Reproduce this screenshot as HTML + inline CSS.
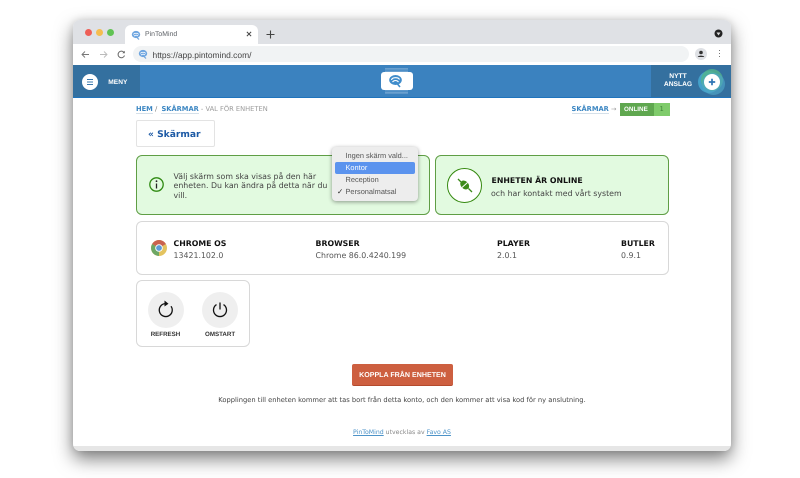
<!DOCTYPE html>
<html><head><meta charset="utf-8">
<style>
html,body{margin:0;padding:0;width:800px;height:478px;overflow:hidden;background:#fff}
*{box-sizing:border-box}
.a{position:absolute;white-space:nowrap}
body{font-family:"DejaVu Sans",sans-serif;color:#333;text-rendering:geometricPrecision}
.m{font-family:"Liberation Sans",sans-serif}
.card{position:absolute;border-radius:6px}
.gr{background:#e2fae0;border:1px solid #5f9e45}
.wh{background:#fff;border:1.500px solid #d8d8d8}
.h{font-weight:bold;font-size:7.800px;color:#111}
.v{font-size:7.850px;color:#555}
.lnk{color:#3b86c2;font-weight:bold;border-bottom:1px solid #d5e0e9}
</style></head><body>

<div class="a" style="left:73px;top:20px;width:658px;height:431px;border-radius:7px;background:#fff;overflow:hidden;box-shadow:0 8px 18px rgba(0,0,0,.5),0 0 8px rgba(0,0,0,.12)">
  <div class="a" style="left:0;top:0;width:658px;height:24px;background:#dfe1e5"></div>
  <div class="a" style="left:0;top:24px;width:658px;height:20px;background:#fff"></div>
  <div class="a" style="left:0;top:426px;width:658px;height:5px;background:#e6e6e6"></div>
  <div class="a" style="left:0;top:45px;width:658px;height:33px;background:#3b82bf;border-bottom:1px solid #1f74bd"></div>
  <div class="a" style="left:0;top:45px;width:67px;height:32px;background:#34709f"></div>
  <div class="a" style="left:578px;top:45px;width:80px;height:32px;background:#34709f"></div>
</div>

<!-- traffic lights -->
<div class="a" style="left:84.500px;top:28.500px;width:7px;height:7px;border-radius:50%;background:#ee5f57"></div>
<div class="a" style="left:95.500px;top:28.500px;width:7px;height:7px;border-radius:50%;background:#f5bd4f"></div>
<div class="a" style="left:107px;top:28.500px;width:7px;height:7px;border-radius:50%;background:#61c354"></div>

<!-- tab -->
<div class="a" style="left:125px;top:25px;width:133px;height:19px;background:#fff;border-radius:6px 6px 0 0"></div>
<svg class="a" style="left:131px;top:29.500px" width="10" height="10" viewBox="0 0 10 10"><ellipse cx="5" cy="4.500" rx="4.200" ry="3.600" fill="#6fa6e0"/><path d="M2.500 4.500C3 2.800 7 2.800 7.500 4.500M3 6c1.500-1 3-1 4 0" stroke="#fff" stroke-width=".8" fill="none"/><path d="M6 7.500L8 9.500" stroke="#6fa6e0" stroke-width="1.200"/></svg>
<div class="a m" style="left:145px;top:31px;font-size:6.900px;color:#5f6368">PinToMind</div>
<svg class="a" style="left:246px;top:31px" width="6" height="6" viewBox="0 0 7 7"><path d="M1 1L6 6M6 1L1 6" stroke="#444" stroke-width="1.100"/></svg>
<svg class="a" style="left:266px;top:30px" width="9" height="9" viewBox="0 0 9 9"><path d="M4.500 .5V8.500M.5 4.500H8.500" stroke="#444" stroke-width="1.100"/></svg>
<svg class="a" style="left:714px;top:29px" width="9" height="9" viewBox="0 0 9 9"><circle cx="4.500" cy="4.500" r="4" fill="#222"/><path d="M2.500 3.500H6.500L4.500 6.500Z" fill="#ddd"/></svg>

<!-- toolbar -->
<svg class="a" style="left:81px;top:49.500px" width="9" height="9" viewBox="0 0 9 9"><path d="M8 4.500H1M4 1.500L1 4.500L4 7.500" stroke="#777" stroke-width=".9" fill="none"/></svg>
<svg class="a" style="left:99px;top:49.500px" width="9" height="9" viewBox="0 0 9 9"><path d="M1 4.500H8M5 1.500L8 4.500L5 7.500" stroke="#bbb" stroke-width=".9" fill="none"/></svg>
<svg class="a" style="left:117px;top:49.500px" width="9" height="9" viewBox="0 0 9 9"><path d="M7.500 5.500A3.300 3.300 0 1 1 7 2.500" stroke="#666" stroke-width="1" fill="none"/><path d="M7.800 .8V3.300H5.300Z" fill="#666"/></svg>
<div class="a" style="left:133px;top:46px;width:556px;height:16px;border-radius:8px;background:#f1f3f4"></div>
<svg class="a" style="left:138px;top:49px" width="10" height="10" viewBox="0 0 10 10"><ellipse cx="5" cy="4.500" rx="4.200" ry="3.600" fill="#6fa6e0"/><path d="M2.500 4.500C3 2.800 7 2.800 7.500 4.500M3 6c1.500-1 3-1 4 0" stroke="#fff" stroke-width=".8" fill="none"/><path d="M6 7.500L8 9.500" stroke="#6fa6e0" stroke-width="1.200"/></svg>
<div class="a m" style="left:152.500px;top:49.500px;font-size:8.450px;color:#444">https://app.pintomind.com/</div>
<svg class="a" style="left:695px;top:48px" width="12" height="12" viewBox="0 0 12 12"><circle cx="6" cy="6" r="6" fill="#dfe1e5"/><circle cx="6" cy="4.500" r="1.800" fill="#333"/><path d="M2.800 9C3 7.200 9 7.200 9.200 9Z" fill="#333"/></svg>
<div class="a" style="left:718.500px;top:50px;width:1.200px;height:1.200px;background:#777;box-shadow:0 3px 0 #777,0 6px 0 #777"></div>

<!-- header -->
<div class="a" style="left:82px;top:74px;width:16px;height:16px;border-radius:50%;background:#fff"></div>
<div class="a" style="left:87px;top:79px;width:6px;height:1px;background:#3a78ad;box-shadow:0 2.500px 0 #3a78ad,0 5px 0 #3a78ad"></div>
<div class="a m" style="left:108.300px;top:78.500px;font-size:6.600px;font-weight:bold;color:#fff">MENY</div>

<div class="a" style="left:385px;top:68px;width:23px;height:26px;background:repeating-linear-gradient(#6aa0cf 0 1.500px,#4d8ec6 1.500px 3px)"></div>
<div class="a" style="left:380.500px;top:72px;width:32px;height:17.500px;background:#fff;border-radius:3px"></div>
<svg class="a" style="left:388px;top:73.500px" width="15" height="14" viewBox="0 0 15 14"><ellipse cx="7.500" cy="6" rx="6.300" ry="5" fill="#3f8ccb"/><path d="M3.500 6C4 3 10.500 3 11.500 5.500M4.500 8C6 6 9 6 10.500 8" stroke="#fff" stroke-width="1.100" fill="none"/><path d="M9.500 10L12 13" stroke="#3f8ccb" stroke-width="1.600"/></svg>

<div class="a m" style="left:652px;top:73px;width:52px;text-align:center;font-size:6.700px;font-weight:bold;color:#fff;line-height:7.700px;white-space:normal">NYTT<br>ANSLAG</div>
<div class="a" style="left:698px;top:71px;width:22px;height:22px;border-radius:50%;background:#46a8d0;opacity:.85"></div>
<div class="a" style="left:701px;top:68.500px;width:22px;height:22px;border-radius:50%;background:#53b58c;opacity:.8"></div>
<div class="a" style="left:702px;top:72.500px;width:23px;height:22px;border-radius:50%;background:#4ea6c8;opacity:.65"></div>
<div class="a" style="left:703.500px;top:74px;width:16px;height:16px;border-radius:50%;background:#fff"></div>
<svg class="a" style="left:707.500px;top:78px" width="8" height="8" viewBox="0 0 8 8"><path d="M4 .8V7.200M.8 4H7.200" stroke="#2e75b5" stroke-width="1.700"/></svg>

<!-- breadcrumb -->
<div class="a" style="left:136px;top:105px;font-size:6.700px;color:#999"><span class="lnk">HEM</span><span style="color:#777"> / &nbsp;</span><span class="lnk">SKÄRMAR</span> - VAL FÖR ENHETEN</div>
<div class="a lnk" style="left:571.500px;top:105px;font-size:6.700px">SKÄRMAR</div>
<div class="a" style="left:611px;top:105px;font-size:6.500px;color:#999">→</div>
<div class="a m" style="left:620px;top:103px;width:34px;height:12.500px;background:#5fa74f;color:#fff;font-size:6.300px;font-weight:bold;line-height:14.500px;padding-left:4px;overflow:hidden">ONLINE</div>
<div class="a" style="left:654px;top:103px;width:15.500px;height:12.500px;background:#7fcb6b;color:#3d7f35;font-size:6.500px;line-height:12.500px;text-align:center">1</div>

<!-- back button -->
<div class="a" style="left:136px;top:120px;width:79px;height:27px;background:#fff;border:1px solid #e3e3e3;border-radius:2px"></div>
<div class="a" style="left:148px;top:129.500px;font-size:9.150px;font-weight:bold;color:#1d5aa5">« Skärmar</div>

<!-- green cards -->
<div class="card gr" style="left:136px;top:155px;width:294px;height:60px"></div>
<svg class="a" style="left:148px;top:176px" width="17" height="17" viewBox="0 0 17 17"><circle cx="8.500" cy="8.500" r="6.700" fill="none" stroke="#2f8a12" stroke-width="1.300"/><path d="M8.500 7.500V12.500" stroke="#222" stroke-width="1.300"/><circle cx="8.500" cy="5.200" r=".9" fill="#222"/></svg>
<div class="a" style="left:173.500px;top:171.500px;font-size:7.850px;line-height:9.600px;color:#444">Välj skärm som ska visas på den här<br>enheten. Du kan ändra på detta när du<br>vill.</div>

<div class="card gr" style="left:435px;top:155px;width:234px;height:60px"></div>
<div class="a" style="left:447px;top:167.500px;width:35px;height:35px;border-radius:50%;background:#fff;border:1.500px solid #35890f"></div>
<svg class="a" style="left:456px;top:175.500px" width="18" height="18" viewBox="0 0 18 18"><path d="M2 3L5 6M12.500 12.500L16 16" stroke="#3d8a1a" stroke-width="1.300"/><ellipse cx="8.700" cy="9" rx="5" ry="3.800" transform="rotate(45 8.700 9)" fill="#3d8a1a"/><path d="M6 11.500L11.500 6.500" stroke="#fff" stroke-width="1"/></svg>
<div class="a h" style="left:491.500px;top:175.500px">ENHETEN ÄR ONLINE</div>
<div class="a v" style="left:491px;top:188.500px;color:#444">och har kontakt med vårt system</div>

<!-- dropdown -->
<div class="a" style="left:332px;top:147px;width:85.500px;height:54px;background:#ededed;border-radius:4px;box-shadow:0 1px 4px rgba(0,0,0,.4)"></div>
<div class="a" style="left:335px;top:162px;width:80px;height:12px;background:#5b93ee;border-radius:2px"></div>
<div class="m" style="position:absolute;left:345.500px;top:150px;font-size:7.400px;line-height:12px;color:#555;white-space:nowrap">Ingen skärm vald...<br><span style="color:#fff">Kontor</span><br>Reception<br>Personalmatsal</div>
<div class="a m" style="left:337px;top:186px;font-size:7.500px;line-height:12px;color:#222">✓</div>

<!-- info card -->
<div class="card wh" style="left:136px;top:221px;width:533px;height:54px"></div>
<svg class="a" style="left:151px;top:240px" width="16" height="16" viewBox="0 0 16 16"><circle cx="8" cy="8" r="8" fill="#e3c35f"/><path d="M8 8L1.100 4A8 8 0 0 1 14.900 4Z" fill="#c9624f"/><path d="M8 8L8 16A8 8 0 0 1 1.100 4Z" fill="#6da765"/><circle cx="8" cy="8" r="3.800" fill="#fff"/><circle cx="8" cy="8" r="2.900" fill="#5d9bd8"/></svg>
<div class="a h" style="left:173.500px;top:238.500px">CHROME OS</div>
<div class="a v" style="left:173.500px;top:251px">13421.102.0</div>
<div class="a h" style="left:315.500px;top:238.500px">BROWSER</div>
<div class="a v" style="left:315.500px;top:251px">Chrome 86.0.4240.199</div>
<div class="a h" style="left:497px;top:238.500px">PLAYER</div>
<div class="a v" style="left:497px;top:251px">2.0.1</div>
<div class="a h" style="left:621px;top:238.500px">BUTLER</div>
<div class="a v" style="left:621px;top:251px">0.9.1</div>

<!-- action card -->
<div class="card wh" style="left:136px;top:280px;width:114px;height:67px"></div>
<div class="a" style="left:148px;top:292px;width:36px;height:36px;border-radius:50%;background:#efefef"></div>
<div class="a" style="left:202px;top:292px;width:36px;height:36px;border-radius:50%;background:#efefef"></div>
<svg class="a" style="left:156px;top:299px" width="20" height="20" viewBox="0 0 20 20"><path d="M15 7.200A6.500 6.500 0 1 1 9 4.600" stroke="#111" stroke-width="1.300" fill="none"/><path d="M8.500 1.500L12.500 4.700L8.500 7.500Z" fill="#111"/></svg>
<svg class="a" style="left:210px;top:299px" width="20" height="20" viewBox="0 0 20 20"><path d="M6.500 5.600A6.500 6.500 0 1 0 13.500 5.600" stroke="#111" stroke-width="1.300" fill="none"/><path d="M10 3.500V10.500" stroke="#111" stroke-width="1.300"/></svg>
<div class="a m" style="left:150.700px;top:330.500px;font-size:6.200px;font-weight:bold;color:#333">REFRESH</div>
<div class="a m" style="left:205px;top:330.500px;font-size:6.200px;font-weight:bold;color:#333">OMSTART</div>

<!-- disconnect -->
<div class="a m" style="left:352px;top:364px;width:101px;height:22px;background:#cd5f40;border-radius:2px;color:#fff;font-size:7.100px;font-weight:bold;line-height:23.500px;text-align:center;border-bottom:1px solid #b44a2d;overflow:hidden">KOPPLA FRÅN ENHETEN</div>
<div class="a" style="left:0;top:396px;width:804px;text-align:center;font-size:6.730px;color:#444">Kopplingen till enheten kommer att tas bort från detta konto, och den kommer att visa kod för ny anslutning.</div>
<div class="a" style="left:0;top:428.500px;width:804px;text-align:center;font-size:6.200px;color:#888"><span style="color:#4d93c8;text-decoration:underline">PinToMind</span> utvecklas av <span style="color:#4d93c8;text-decoration:underline">Favo AS</span></div>

</body></html>
